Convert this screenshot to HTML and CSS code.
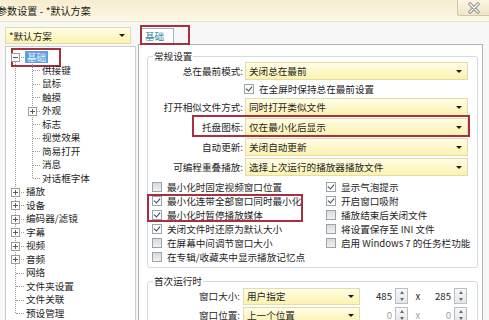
FILE: index.html
```html
<!DOCTYPE html>
<html lang="zh-CN">
<head>
<meta charset="utf-8">
<title>参数设置</title>
<link rel="stylesheet" href="styles.css">
</head>
<body>
<div class="win">
  <header class="titlebar">
    <span class="title">参数设置 - *默认方案</span>
    <span class="close">
      <svg width="14" height="12" viewBox="0 0 14 12"><path d="M3 2 L11 10 M11 2 L3 10" stroke="#8a8a8a" stroke-width="3.2" stroke-linecap="round"/><path d="M3 2 L11 10 M11 2 L3 10" stroke="#ffffff" stroke-width="1.4" stroke-linecap="round"/></svg>
    </span>
  </header>
  <div class="main">
    <aside class="left">
      <div class="combo profile"><span class="ctext">*默认方案</span><i class="arr"></i></div>
      <div class="tree">
        <ul class="root">
          <li>
            <div class="row l0"><span class="tw"><i class="box minus"></i></span><span class="lbl sel">基础</span><span class="mark treemark"></span></div>
            <ul class="kids">
              <li><div class="row l1"><span class="tw"></span><span class="lbl">供接键</span></div></li>
              <li><div class="row l1"><span class="tw"></span><span class="lbl">鼠标</span></div></li>
              <li><div class="row l1"><span class="tw"></span><span class="lbl">触摸</span></div></li>
              <li><div class="row l1"><span class="tw"><i class="box plus"></i></span><span class="lbl">外观</span></div></li>
              <li><div class="row l1"><span class="tw"></span><span class="lbl">标志</span></div></li>
              <li><div class="row l1"><span class="tw"></span><span class="lbl">视觉效果</span></div></li>
              <li><div class="row l1"><span class="tw"></span><span class="lbl">简易打开</span></div></li>
              <li><div class="row l1"><span class="tw"></span><span class="lbl">消息</span></div></li>
              <li><div class="row l1"><span class="tw"></span><span class="lbl">对话框字体</span></div></li>
            </ul>
          </li>
          <li><div class="row l0"><span class="tw"><i class="box plus"></i></span><span class="lbl">播放</span></div></li>
          <li><div class="row l0"><span class="tw"><i class="box plus"></i></span><span class="lbl">设备</span></div></li>
          <li><div class="row l0"><span class="tw"><i class="box plus"></i></span><span class="lbl">编码器/滤镜</span></div></li>
          <li><div class="row l0"><span class="tw"><i class="box plus"></i></span><span class="lbl">字幕</span></div></li>
          <li><div class="row l0"><span class="tw"><i class="box plus"></i></span><span class="lbl">视频</span></div></li>
          <li><div class="row l0"><span class="tw"><i class="box plus"></i></span><span class="lbl">音频</span></div></li>
          <li><div class="row l0"><span class="tw"></span><span class="lbl">网络</span></div></li>
          <li><div class="row l0"><span class="tw"></span><span class="lbl">文件夹设置</span></div></li>
          <li><div class="row l0"><span class="tw"></span><span class="lbl">文件关联</span></div></li>
          <li><div class="row l0"><span class="tw"></span><span class="lbl">预设管理</span></div></li>
        </ul>
      </div>
    </aside>
    <section class="right">
      <div class="tabs">
        <span class="tab">基础</span>
        <span class="mark tabmark"></span>
      </div>
      <div class="panel">
        <div class="group g1">
          <span class="gtitle">常规设置</span>
          <div class="form">
            <span class="flabel">总在最前模式:</span>
            <div class="combo"><span class="ctext">关闭总在最前</span><i class="arr"></i></div>
            <span></span>
            <div class="chk"><i class="cb on"></i>在全屏时保持总在最前设置</div>
            <span class="flabel">打开相似文件方式:</span>
            <div class="combo"><span class="ctext">同时打开类似文件</span><i class="arr"></i></div>
            <span class="flabel tray">托盘图标:<span class="mark traymark"></span></span>
            <div class="combo"><span class="ctext">仅在最小化后显示</span><i class="arr"></i></div>
            <span class="flabel">自动更新:</span>
            <div class="combo"><span class="ctext">关闭自动更新</span><i class="arr"></i></div>
            <span class="flabel">可编程重叠播放:</span>
            <div class="combo"><span class="ctext">选择上次运行的播放器播放文件</span><i class="arr"></i></div>
          </div>
          <div class="checks">
            <div class="col">
              <div class="chk"><i class="cb"></i>最小化时固定视频窗口位置</div>
              <div class="hlbox">
                <div class="chk"><i class="cb on"></i>最小化连带全部窗口同时最小化</div>
                <div class="chk"><i class="cb on"></i>最小化时暂停播放媒体</div>
              </div>
              <div class="chk"><i class="cb on"></i>关闭文件时还原为默认大小</div>
              <div class="chk"><i class="cb"></i>在屏幕中间调节窗口大小</div>
              <div class="chk"><i class="cb"></i>在专辑/收藏夹中显示播放记忆点</div>
            </div>
            <div class="col">
              <div class="chk"><i class="cb on"></i>显示气泡提示</div>
              <div class="chk"><i class="cb on"></i>开启窗口吸附</div>
              <div class="chk"><i class="cb"></i>播放结束后关闭文件</div>
              <div class="chk"><i class="cb"></i>将设置保存至 INI 文件</div>
              <div class="chk"><i class="cb"></i>启用 Windows 7 的任务栏功能</div>
            </div>
          </div>
        </div>
        <div class="group g2">
          <span class="gtitle">首次运行时</span>
          <div class="frow">
            <span class="flabel w2">窗口大小:</span>
            <div class="combo small"><span class="ctext">用户指定</span><i class="arr"></i></div>
            <span class="num">485</span><span class="spin"><i class="up"></i><i class="dn"></i></span>
            <span class="times">x</span>
            <span class="num n2">285</span><span class="spin"><i class="up"></i><i class="dn"></i></span>
          </div>
          <div class="frow">
            <span class="flabel w2">窗口位置:</span>
            <div class="combo small"><span class="ctext">上一个位置</span><i class="arr"></i></div>
            <span class="num dis">0</span><span class="spin"><i class="up"></i><i class="dn"></i></span>
            <span class="times dis">x</span>
            <span class="num n2 dis">0</span><span class="spin"><i class="up"></i><i class="dn"></i></span>
          </div>
        </div>
      </div>
    </section>
  </div>
</div>
</body>
</html>
```

FILE: styles.css
```css
* { box-sizing: border-box; }
html, body { margin: 0; padding: 0; }
body {
  width: 489px;
  height: 320px;
  overflow: hidden;
  background: #f7f7f7;
  font-family: "Noto Sans CJK SC", "Noto Sans", sans-serif;
  font-size: 9.6px;
  color: #1e1e1e;
}
ul { list-style: none; margin: 0; padding: 0; }

.win { width: 489px; height: 320px; display: flex; flex-direction: column; }

/* title bar */
.titlebar {
  height: 22px;
  flex: none;
  display: flex;
  align-items: flex-start;
  background: linear-gradient(#f6edd0, #faf3dc 70%, #fdf8e8);
  border-bottom: 1px solid #ece4c8;
}
.title {
  margin-left: -3px;
  line-height: 22px;
  font-size: 10px;
  color: #202020;
  letter-spacing: 0.1px;
}
.close {
  margin-left: auto;
  width: 32px;
  height: 16px;
  border: 1px solid #cfc7a8;
  border-top: none;
  border-right: none;
  border-bottom-left-radius: 3px;
  background: linear-gradient(#fbf6e4, #efe6c6);
  display: flex;
  align-items: center;
  justify-content: center;
}

.main {
  flex: 1;
  display: flex;
  gap: 2px;
  padding: 5px 6px 0 5px;
  min-height: 0;
}

/* left column */
.left { width: 131px; flex: none; display: flex; flex-direction: column; gap: 2px; }

.combo {
  height: 18px;
  display: flex;
  align-items: center;
  padding-left: 3px;
  border: 1px solid #e3dca8;
  background: linear-gradient(#fffde9, #fdf7c6 55%, #fbf2b2);
  white-space: nowrap;
}
.ctext { flex: 1; }
.arr {
  width: 0; height: 0;
  border-left: 3px solid transparent;
  border-right: 3px solid transparent;
  border-top: 3px solid #1a1a1a;
  margin-right: 5px;
}
.profile { width: 126px; height: 17px; }

.tree {
  flex: 1;
  background: #fff;
  border: 1px solid #c9cdd2;
  border-bottom: none;
  padding-top: 3px;
  position: relative;
}
.root { position: relative; }
.root::before {
  content: "";
  position: absolute;
  left: 9px;
  top: 7px;
  bottom: 7px;
  border-left: 1px dotted #9a9a9a;
}
.kids { position: relative; }
.kids::before {
  content: "";
  position: absolute;
  left: 26px;
  top: 0;
  bottom: 7px;
  border-left: 1px dotted #9a9a9a;
}
.row {
  height: 13.5px;
  display: flex;
  align-items: center;
  position: relative;
  white-space: nowrap;
}
.tw { position: relative; height: 100%; flex: none; }
.l0 .tw { width: 19px; }
.l1 .tw { width: 35px; }
.tw::after {
  content: "";
  position: absolute;
  top: 50%;
  border-top: 1px dotted #9a9a9a;
}
.l0 .tw::after { left: 10px; width: 8px; }
.l1 .tw::after { left: 27px; width: 7px; }
.box {
  position: absolute;
  top: 50%;
  margin-top: -4px;
  width: 9px;
  height: 9px;
  border: 1px solid #9c9c9c;
  background: #fff;
  z-index: 1;
}
.l0 .box { left: 5px; }
.l1 .box { left: 22px; }
.box::before {
  content: "";
  position: absolute;
  left: 1px; right: 1px; top: 3px;
  height: 1px;
  background: #5a5a5a;
}
.plus::after {
  content: "";
  position: absolute;
  top: 1px; bottom: 1px; left: 3px;
  width: 1px;
  background: #5a5a5a;
}
.lbl { line-height: 13px; padding: 0 1px; }
.sel {
  background: #5e9fe0;
  color: #e4f0ff;
  padding: 0 2px;
  line-height: 12px;
}

.mark {
  position: absolute;
  border: 2px solid #a6303c;
  pointer-events: none;
}
.treemark { left: 5px; top: -2px; width: 50px; height: 19px; }

/* right column */
.right { flex: 1; display: flex; flex-direction: column; min-width: 0; }
.tabs { height: 17px; flex: none; display: flex; align-items: flex-end; position: relative; }
.tab {
  margin-left: 3px;
  height: 17px;
  padding: 0 4px 0 3px;
  background: #fff;
  border: 1px solid #a9b3bd;
  border-bottom: none;
  color: #2f8799;
  line-height: 15px;
  position: relative;
  top: 1px;
  width: 33px;
}
.tabmark { left: 2px; top: -2px; width: 50px; height: 20px; }

.panel {
  flex: 1;
  background: #fff;
  border: 1px solid #aab4be;
  border-bottom: none;
  padding: 11px 4px 0 8px;
}
.group {
  position: relative;
  border: 1px solid #d3dbe2;
  border-radius: 3px;
}
.gtitle {
  position: absolute;
  left: 5px;
  top: -8px;
  background: #fff;
  padding: 0 1px;
  line-height: 14px;
}
.g1 { padding: 5px 0 3px 0; }

.form {
  display: grid;
  grid-template-columns: 95px 223px;
  column-gap: 2px;
  row-gap: 2px;
}
.flabel { text-align: right; line-height: 18px; white-space: nowrap; }
.tray { position: relative; }
.traymark { left: 44px; top: -3px; width: 278px; height: 22px; }

.chk {
  height: 14px;
  display: flex;
  align-items: center;
  white-space: nowrap;
}
.form .chk { margin: 0 -1px 0 -1px; }
.cb {
  width: 10px;
  height: 10px;
  flex: none;
  margin-right: 5px;
  border: 1px solid #9ea3a8;
  background: linear-gradient(#d9dcdf, #eef0f2);
  position: relative;
}
.cb.on { background: #fbfbfb; }
.cb.on::after {
  content: "";
  position: absolute;
  left: 2px;
  top: 0px;
  width: 3px;
  height: 5px;
  border-right: 1.5px solid #3a4a66;
  border-bottom: 1.5px solid #3a4a66;
  transform: rotate(40deg);
}

.checks {
  display: flex;
  margin-top: 4px;
  padding-left: 4px;
}
.col { width: 174px; flex: none; }
.hlbox {
  margin-left: -5px;
  padding-left: 5px;
  width: 156px;
  outline: 2px solid #a6303c;
  outline-offset: -2px;
}

.g2 { margin-top: 13px; padding-top: 5px; height: 60px; }
.frow { display: flex; align-items: center; height: 18px; margin-bottom: 0; }
.frow + .frow { margin-top: 1px; }
.w2 { width: 92px; flex: none; }
.combo.small { width: 117px; margin-left: 3px; height: 17px; }
.num { width: 34px; text-align: right; padding-right: 2px; }
.n2 { width: 25px; }
.times { width: 20px; text-align: center; }
.dis { color: #a0a0a0; }
.spin {
  width: 13px;
  height: 16px;
  margin-left: 1px;
  border: 1px solid #b9bec4;
  background: linear-gradient(#f6f7f8, #e3e6e9);
  display: flex;
  flex-direction: column;
  align-items: center;
  justify-content: space-around;
}
.spin + .times { margin-left: 0; }
.spin i { width: 0; height: 0; border-left: 2.5px solid transparent; border-right: 2.5px solid transparent; }
.spin .up { border-bottom: 3px solid #6b6b6b; }
.spin .dn { border-top: 3px solid #6b6b6b; }
```
